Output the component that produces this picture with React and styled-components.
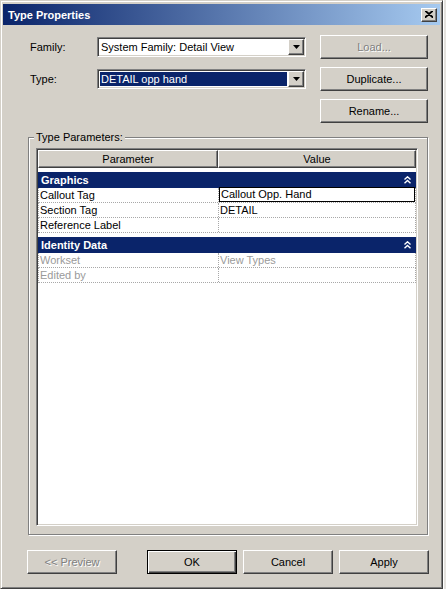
import React from 'react'
import styled, {createGlobalStyle, css} from 'styled-components'

const FACE = '#d4d0c8'
const NAVY = '#0a246a'

const params = [
  {
    title: 'Graphics',
    rows: [
      {name: 'Callout Tag', value: 'Callout Opp. Hand', editing: true},
      {name: 'Section Tag', value: 'DETAIL'},
      {name: 'Reference Label', value: ''},
    ],
  },
  {
    title: 'Identity Data',
    rows: [
      {name: 'Workset', value: 'View Types', muted: true},
      {name: 'Edited by', value: '', muted: true},
    ],
  },
]

// Type Properties dialog
export default () => {
  return (
    <>
      <GlobalStyle />
      <Page>
        <Dialog>
          <TitleBar>
            Type Properties
            <CloseBtn>
              <svg width="8" height="7" viewBox="0 0 8 7">
                <path d="M0 0 L8 7 M8 0 L0 7 M1 0 L8 6 M7 0 L0 6" stroke="#000" strokeWidth="1.2" />
              </svg>
            </CloseBtn>
          </TitleBar>

          <TopArea>
            <Label>Family:</Label>
            <Combo>
              <ComboText>System Family: Detail View</ComboText>
              <DropBtn><Arrow /></DropBtn>
            </Combo>
            <Button disabled>Load...</Button>

            <Label>Type:</Label>
            <Combo>
              <ComboText $selected>DETAIL opp hand</ComboText>
              <DropBtn><Arrow /></DropBtn>
            </Combo>
            <Button>Duplicate...</Button>

            <span />
            <span />
            <Button>Rename...</Button>
          </TopArea>

          <Group>
            <Legend>Type Parameters:</Legend>
            <Grid>
              <HeadRow>
                <HeadCell>Parameter</HeadCell>
                <HeadCell>Value</HeadCell>
              </HeadRow>
              {params.map(section => (
                <React.Fragment key={section.title}>
                  <Section>
                    {section.title}
                    <svg width="7" height="8" viewBox="0 0 7 8">
                      <path d="M0.5 3.5 L3.5 0.8 L6.5 3.5 M0.5 7.2 L3.5 4.5 L6.5 7.2" stroke="#fff" strokeWidth="1.4" fill="none" />
                    </svg>
                  </Section>
                  {section.rows.map(row => (
                    <DataRow key={row.name} $muted={row.muted}>
                      <NameCell>{row.name}</NameCell>
                      <ValueCell $editing={row.editing}>{row.value}</ValueCell>
                    </DataRow>
                  ))}
                </React.Fragment>
              ))}
            </Grid>
          </Group>

          <Footer>
            <PreviewButton $w={90} disabled>&lt;&lt; Preview</PreviewButton>
            <Button $w={90} $default>OK</Button>
            <Button $w={90}>Cancel</Button>
            <Button $w={90}>Apply</Button>
          </Footer>
        </Dialog>
        <Behind />
      </Page>
    </>
  )
}

const Arrow = () => (
  <svg width="7" height="4" viewBox="0 0 7 4">
    <path d="M0 0 H7 L3.5 4 Z" fill="#000" />
  </svg>
)

// Styled Components
const GlobalStyle = createGlobalStyle`
  html, body { margin: 0; padding: 0; background: #fff; }
  body {
    font-family: "Liberation Sans", Arial, sans-serif;
    font-size: 11px;
    color: #000;
  }
  #root { width: 446px; height: 594px; overflow: hidden; }
`

const raised = css`
  border: 1px solid;
  border-color: #fff #404040 #404040 #fff;
  box-shadow: inset -1px -1px 0 #808080, inset 1px 1px 0 ${FACE};
`

const sunken = css`
  border: 1px solid;
  border-color: #808080 #fff #fff #808080;
  box-shadow: inset 1px 1px 0 #404040, inset -1px -1px 0 ${FACE};
`

const Page = styled.div`
  display: flex;
  align-items: flex-start;
`

const Behind = styled.div`
  flex: 1;
  height: 589px;
  background: #e4e2de;
  border-left: 1px solid #fff;
`

const Dialog = styled.div`
  width: 443px;
  height: 589px;
  box-sizing: border-box;
  padding: 3px 2px 2px;
  background: ${FACE};
  border: 1px solid;
  border-color: ${FACE} #404040 #404040 ${FACE};
  box-shadow: inset 1px 1px 0 #fff, inset -1px -1px 0 #808080;
  display: flex;
  flex-direction: column;
`

const TitleBar = styled.div`
  height: 21px;
  display: flex;
  align-items: center;
  justify-content: space-between;
  padding: 0 3px 0 5px;
  color: #fff;
  font-weight: bold;
  font-size: 11px;
  background: linear-gradient(to right, ${NAVY}, #a6caf0);
`

const CloseBtn = styled.div`
  width: 16px;
  height: 14px;
  box-sizing: border-box;
  background: ${FACE};
  display: flex;
  align-items: center;
  justify-content: center;
  ${raised}
`

const TopArea = styled.div`
  display: grid;
  grid-template-columns: 53px 209px 108px;
  grid-auto-rows: 24px;
  column-gap: 14px;
  row-gap: 8px;
  align-items: center;
  padding: 10px 0 0 27px;
`

const Label = styled.span`
  white-space: nowrap;
`

const Combo = styled.div`
  height: 20px;
  box-sizing: border-box;
  padding: 1px;
  display: flex;
  background: #fff;
  ${sunken}
`

const ComboText = styled.div`
  flex: 1;
  display: flex;
  align-items: center;
  margin: 1px;
  padding-left: 1px;
  white-space: nowrap;
  overflow: hidden;
  color: ${p => p.$selected ? '#fff' : '#000'};
  background: ${p => p.$selected ? NAVY : 'transparent'};
`

const DropBtn = styled.div`
  width: 16px;
  box-sizing: border-box;
  display: flex;
  align-items: center;
  justify-content: center;
  background: ${FACE};
  ${raised}
`

const Button = styled.button`
  width: ${p => p.$w ? `${p.$w}px` : '100%'};
  height: 24px;
  padding: 0;
  box-sizing: border-box;
  font: inherit;
  font-size: 11px;
  color: #000;
  background: ${FACE};
  ${raised}
  ${p => p.$default && css`
    border-color: #000;
    box-shadow: inset 1px 1px 0 #fff, inset -1px -1px 0 #404040, inset -2px -2px 0 #808080;
  `}
  &:disabled {
    color: #808080;
    text-shadow: 1px 1px 0 #fff;
  }
`

const PreviewButton = styled(Button)`
  margin-right: 24px;
`

const Group = styled.fieldset`
  flex: 1;
  min-width: 0;
  margin: 8px 12px 0 25px;
  padding: 4px 9px 8px 7px;
  border: 1px solid #808080;
  box-shadow: 1px 1px 0 #fff, inset 1px 1px 0 #fff;
  display: flex;
  flex-direction: column;
`

const Legend = styled.legend`
  padding: 0 2px;
  margin-left: -2px;
  line-height: 13px;
  background: ${FACE};
`

const Grid = styled.div`
  flex: 1;
  padding: 1px;
  background: #fff;
  display: flex;
  flex-direction: column;
  ${sunken}
`

const HeadRow = styled.div`
  display: grid;
  grid-template-columns: 180px 1fr;
  height: 18px;
`

const HeadCell = styled.div`
  box-sizing: border-box;
  display: flex;
  align-items: center;
  justify-content: center;
  background: ${FACE};
  ${raised}
`

const Section = styled.div`
  height: 16px;
  margin-top: 4px;
  padding: 0 5px 0 3px;
  display: flex;
  align-items: center;
  justify-content: space-between;
  background: ${NAVY};
  color: #fff;
  font-weight: bold;
`

const DataRow = styled.div`
  display: grid;
  grid-template-columns: 180px 1fr;
  height: 15px;
  box-sizing: border-box;
  border: 1px dotted #a8a8a8;
  border-top: none;
  color: ${p => p.$muted ? '#9a9a9a' : '#000'};
  line-height: 14px;
`

const NameCell = styled.div`
  padding-left: 1px;
  border-right: 1px dotted #a8a8a8;
  white-space: nowrap;
`

const ValueCell = styled.div`
  padding-left: 1px;
  white-space: nowrap;
  ${p => p.$editing && css`
    border: 1px solid #000;
    margin: -1px 0 0 0;
    line-height: 13px;
    padding-left: 1px;
  `}
`

const Footer = styled.div`
  display: flex;
  gap: 6px;
  padding-left: 24px;
  margin: 15px 0 12px;
`
